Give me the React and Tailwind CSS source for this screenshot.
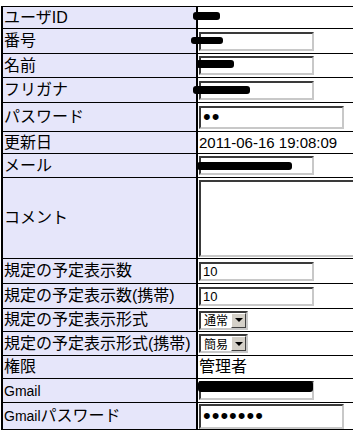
import React from "react";

const boxBorder =
  "border-2 border-t-[#3a3a3a] border-l-[#3a3a3a] border-r-[#c8c8c8] border-b-[#c8c8c8] bg-white";

function TextBox({ value = "", type = "text", className = "w-[115px] h-[19px] text-[13px]" }) {
  return (
    <input
      type={type}
      value={value}
      readOnly
      className={`${boxBorder} ${className} px-[2px] leading-none outline-none font-['Liberation_Sans',sans-serif] text-black`}
    />
  );
}

function Select({ label }) {
  return (
    <div className={`${boxBorder} w-[49px] h-[19px] flex items-center justify-between`}>
      <span className="pl-[3px] text-[12px] leading-none font-['Noto_Sans_CJK_JP',sans-serif]">
        {label}
      </span>
      <span className="w-[15px] h-[15px] bg-[#d4d0c8] border border-t-white border-l-white border-r-[#404040] border-b-[#404040] flex items-center justify-center">
        <span className="w-0 h-0 border-x-[4px] border-x-transparent border-t-[4px] border-t-black" />
      </span>
    </div>
  );
}

// black marker scribbles over private values
function Blob({ className }) {
  return <span className={`absolute bg-black rounded-[3px] ${className}`} />;
}

function Row({ label, h, children, blob }) {
  return (
    <div className={`relative flex border-b border-black ${h}`}>
      <div className="w-[197px] shrink-0 bg-[#e6e6fa] border-l-2 border-r-2 border-black flex items-center pl-px text-[16px] leading-none whitespace-nowrap overflow-hidden">
        {label}
      </div>
      <div className="flex-1 flex items-center pl-px">{children}</div>
      {blob}
    </div>
  );
}

export default function App() {
  return (
    <div className="w-[353px] h-[440px] overflow-hidden bg-white font-['Liberation_Sans','Noto_Sans_CJK_JP',sans-serif] text-black">
      <div className="mt-[6px] ml-px w-[400px] border-t border-black">
        <Row label="ユーザID" h="h-[22px]" blob={<Blob className="left-[192px] top-[5px] w-[27px] h-[8px]" />} />
        <Row label="番号" h="h-[25px]" blob={<Blob className="left-[190px] top-[8px] w-[32px] h-[7px]" />}>
          <TextBox />
        </Row>
        <Row label="名前" h="h-[24px]" blob={<Blob className="left-[195px] top-[6px] w-[38px] h-[8px]" />}>
          <TextBox />
        </Row>
        <Row label="フリガナ" h="h-[25px]" blob={<Blob className="left-[192px] top-[8px] w-[57px] h-[8px]" />}>
          <TextBox />
        </Row>
        <Row label="パスワード" h="h-[29px]">
          <TextBox type="password" value="ab" className="w-[145px] h-[23px] text-[22px] tracking-[1px]" />
        </Row>
        <Row label="更新日" h="h-[22px]">
          <span className="text-[15px] leading-none">2011-06-16 19:08:09</span>
        </Row>
        <Row label="メール" h="h-[24px]" blob={<Blob className="left-[196px] top-[8px] w-[95px] h-[8px]" />}>
          <TextBox />
        </Row>
        <Row label="コメント" h="h-[81px]">
          <textarea readOnly className={`${boxBorder} w-[170px] h-[77px] resize-none outline-none`} />
        </Row>
        <Row label="規定の予定表示数" h="h-[25px]">
          <TextBox value="10" />
        </Row>
        <Row label="規定の予定表示数(携帯)" h="h-[25px]">
          <TextBox value="10" />
        </Row>
        <Row label="規定の予定表示形式" h="h-[23px]">
          <Select label="通常" />
        </Row>
        <Row label="規定の予定表示形式(携帯)" h="h-[24px]">
          <Select label="簡易" />
        </Row>
        <Row label="権限" h="h-[23px]">
          <span className="text-[16px] leading-none">管理者</span>
        </Row>
        <Row
          label={<span className="text-[14px]">Gmail</span>}
          h="h-[24px]"
          blob={<Blob className="left-[197px] top-[2px] w-[115px] h-[11px] rounded-[1px]" />}
        >
          <TextBox />
        </Row>
        <Row
          label={
            <span>
              <span className="text-[14px]">Gmail</span>パスワード
            </span>
          }
          h="h-[27px]"
        >
          <TextBox type="password" value="abcdefg" className="w-[145px] h-[25px] text-[22px] tracking-[1px]" />
        </Row>
      </div>
    </div>
  );
}
